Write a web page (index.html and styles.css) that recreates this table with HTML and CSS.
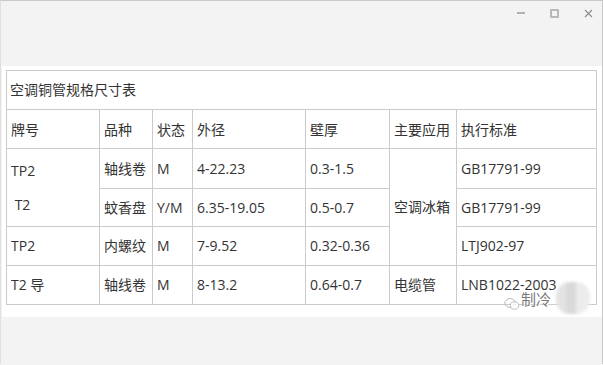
FILE: index.html
```html
<!DOCTYPE html>
<html lang="zh-CN">
<head>
<meta charset="utf-8">
<title>空调铜管规格尺寸表</title>
<link rel="stylesheet" href="styles.css">
</head>
<body>
<div class="window">
  <div class="titlebar">
    <span class="ctl min"></span>
    <span class="ctl max"></span>
    <span class="ctl close">
      <svg width="9" height="9" viewBox="0 0 9 9"><path d="M1 1L8 8M8 1L1 8" stroke="#8a8a8a" stroke-width="1.1" fill="none"/></svg>
    </span>
  </div>
  <div class="content">
    <table class="spec">
      <colgroup>
        <col class="c1"><col class="c2"><col class="c3"><col class="c4"><col class="c5"><col class="c6"><col class="c7">
      </colgroup>
      <tr class="r-title"><td colspan="7">空调铜管规格尺寸表</td></tr>
      <tr class="r-head">
        <td>牌号</td><td>品种</td><td>状态</td><td>外径</td><td>壁厚</td><td>主要应用</td><td>执行标准</td>
      </tr>
      <tr class="r1">
        <td rowspan="2" class="stack"><div>TP2</div><div>&nbsp;T2</div></td>
        <td>轴线卷</td><td>M</td><td>4-22.23</td><td>0.3-1.5</td>
        <td rowspan="3">空调冰箱</td>
        <td>GB17791-99</td>
      </tr>
      <tr class="r2">
        <td>蚊香盘</td><td>Y/M</td><td>6.35-19.05</td><td>0.5-0.7</td><td>GB17791-99</td>
      </tr>
      <tr class="r3">
        <td>TP2</td><td>内螺纹</td><td>M</td><td>7-9.52</td><td>0.32-0.36</td><td>LTJ902-97</td>
      </tr>
      <tr class="r4">
        <td>T2 导</td><td>轴线卷</td><td>M</td><td>8-13.2</td><td>0.64-0.7</td><td>电缆管</td><td>LNB1022-2003</td>
      </tr>
    </table>
  </div>
  <div class="footer"></div>
  <div class="watermark">
    <svg class="wm-icon" width="16" height="14" viewBox="0 0 16 14"><ellipse cx="6" cy="6" rx="5.2" ry="4.5" fill="none" stroke="#bdbdbd" stroke-width="1"/><ellipse cx="10.5" cy="8.5" rx="4.3" ry="3.7" fill="rgba(255,255,255,0.8)" stroke="#bdbdbd" stroke-width="1"/></svg>
    <span class="wm-text">制冷</span>
    <span class="wm-blob"></span>
  </div>
</div>
</body>
</html>
```
FILE: styles.css
```css
html, body {
  margin: 0;
  padding: 0;
}
body {
  width: 603px;
  height: 365px;
  overflow: hidden;
  background: #f3f3f3;
  font-family: "Open Sans", "Noto Sans CJK SC", sans-serif;
  font-size: 14px;
  color: #333;
}
.window {
  position: relative;
  height: 364px;
  border-top: 1px solid #c9c9c9;
  border-right: 1px solid #c9c9c9;
  border-left: 1px solid #e0e0e0;
  box-sizing: border-box;
}
.titlebar {
  height: 65px;
  display: flex;
  justify-content: flex-end;
  align-items: flex-start;
  padding-right: 9px;
  gap: 25px;
}
.ctl {
  width: 9px;
  height: 24px;
  display: flex;
  align-items: center;
  justify-content: center;
}
.ctl.min::before {
  content: "";
  width: 8px;
  height: 2px;
  background: #b0b0b0;
}
.ctl.max::before {
  content: "";
  width: 5px;
  height: 5px;
  border: 2px solid #b8b8b8;
  border-radius: 1px;
}
.content {
  background: #fff;
  margin-left: 1px;
  padding: 4px 5px 12px 4px;
}
.spec {
  border-collapse: collapse;
  table-layout: fixed;
  width: 590px;
}
.c1 { width: 93px; }
.c2 { width: 53px; }
.c3 { width: 40px; }
.c4 { width: 113px; }
.c5 { width: 84px; }
.c6 { width: 67px; }
.c7 { width: 140px; }
.spec td {
  border: 1px solid #cbcbcb;
  padding: 0 3px 0 4px;
  vertical-align: middle;
  white-space: nowrap;
  line-height: 20px;
}
.r-title td { height: 38px; padding-left: 3px; }
.r-head td { height: 36px; padding-top: 2px; }
.r1 td { height: 39px; }
.r2 td { height: 37px; }
.r3 td { height: 38px; }
.r4 td { height: 38px; }
.spec td.stack {
  line-height: 34px;
}
.watermark {
  position: absolute;
  left: 501px;
  top: 280px;
  width: 95px;
  height: 34px;
  display: flex;
  align-items: center;
}
.wm-icon {
  margin-top: 12px;
  margin-left: 2px;
}
.wm-text {
  margin-left: 1px;
  font-family: "Noto Sans CJK SC", sans-serif;
  font-size: 15px;
  color: #7a7a7a;
  text-shadow: 0 0 1px #fff, 1px 1px 0 #fff;
}
.wm-blob {
  position: absolute;
  left: 54px;
  top: 1px;
  width: 34px;
  height: 32px;
  border-radius: 14px;
  background: linear-gradient(90deg, #e3e3e3 0 30%, #d9d9d9 30% 60%, #ececec 60%);
  filter: blur(1.5px);
}
```
